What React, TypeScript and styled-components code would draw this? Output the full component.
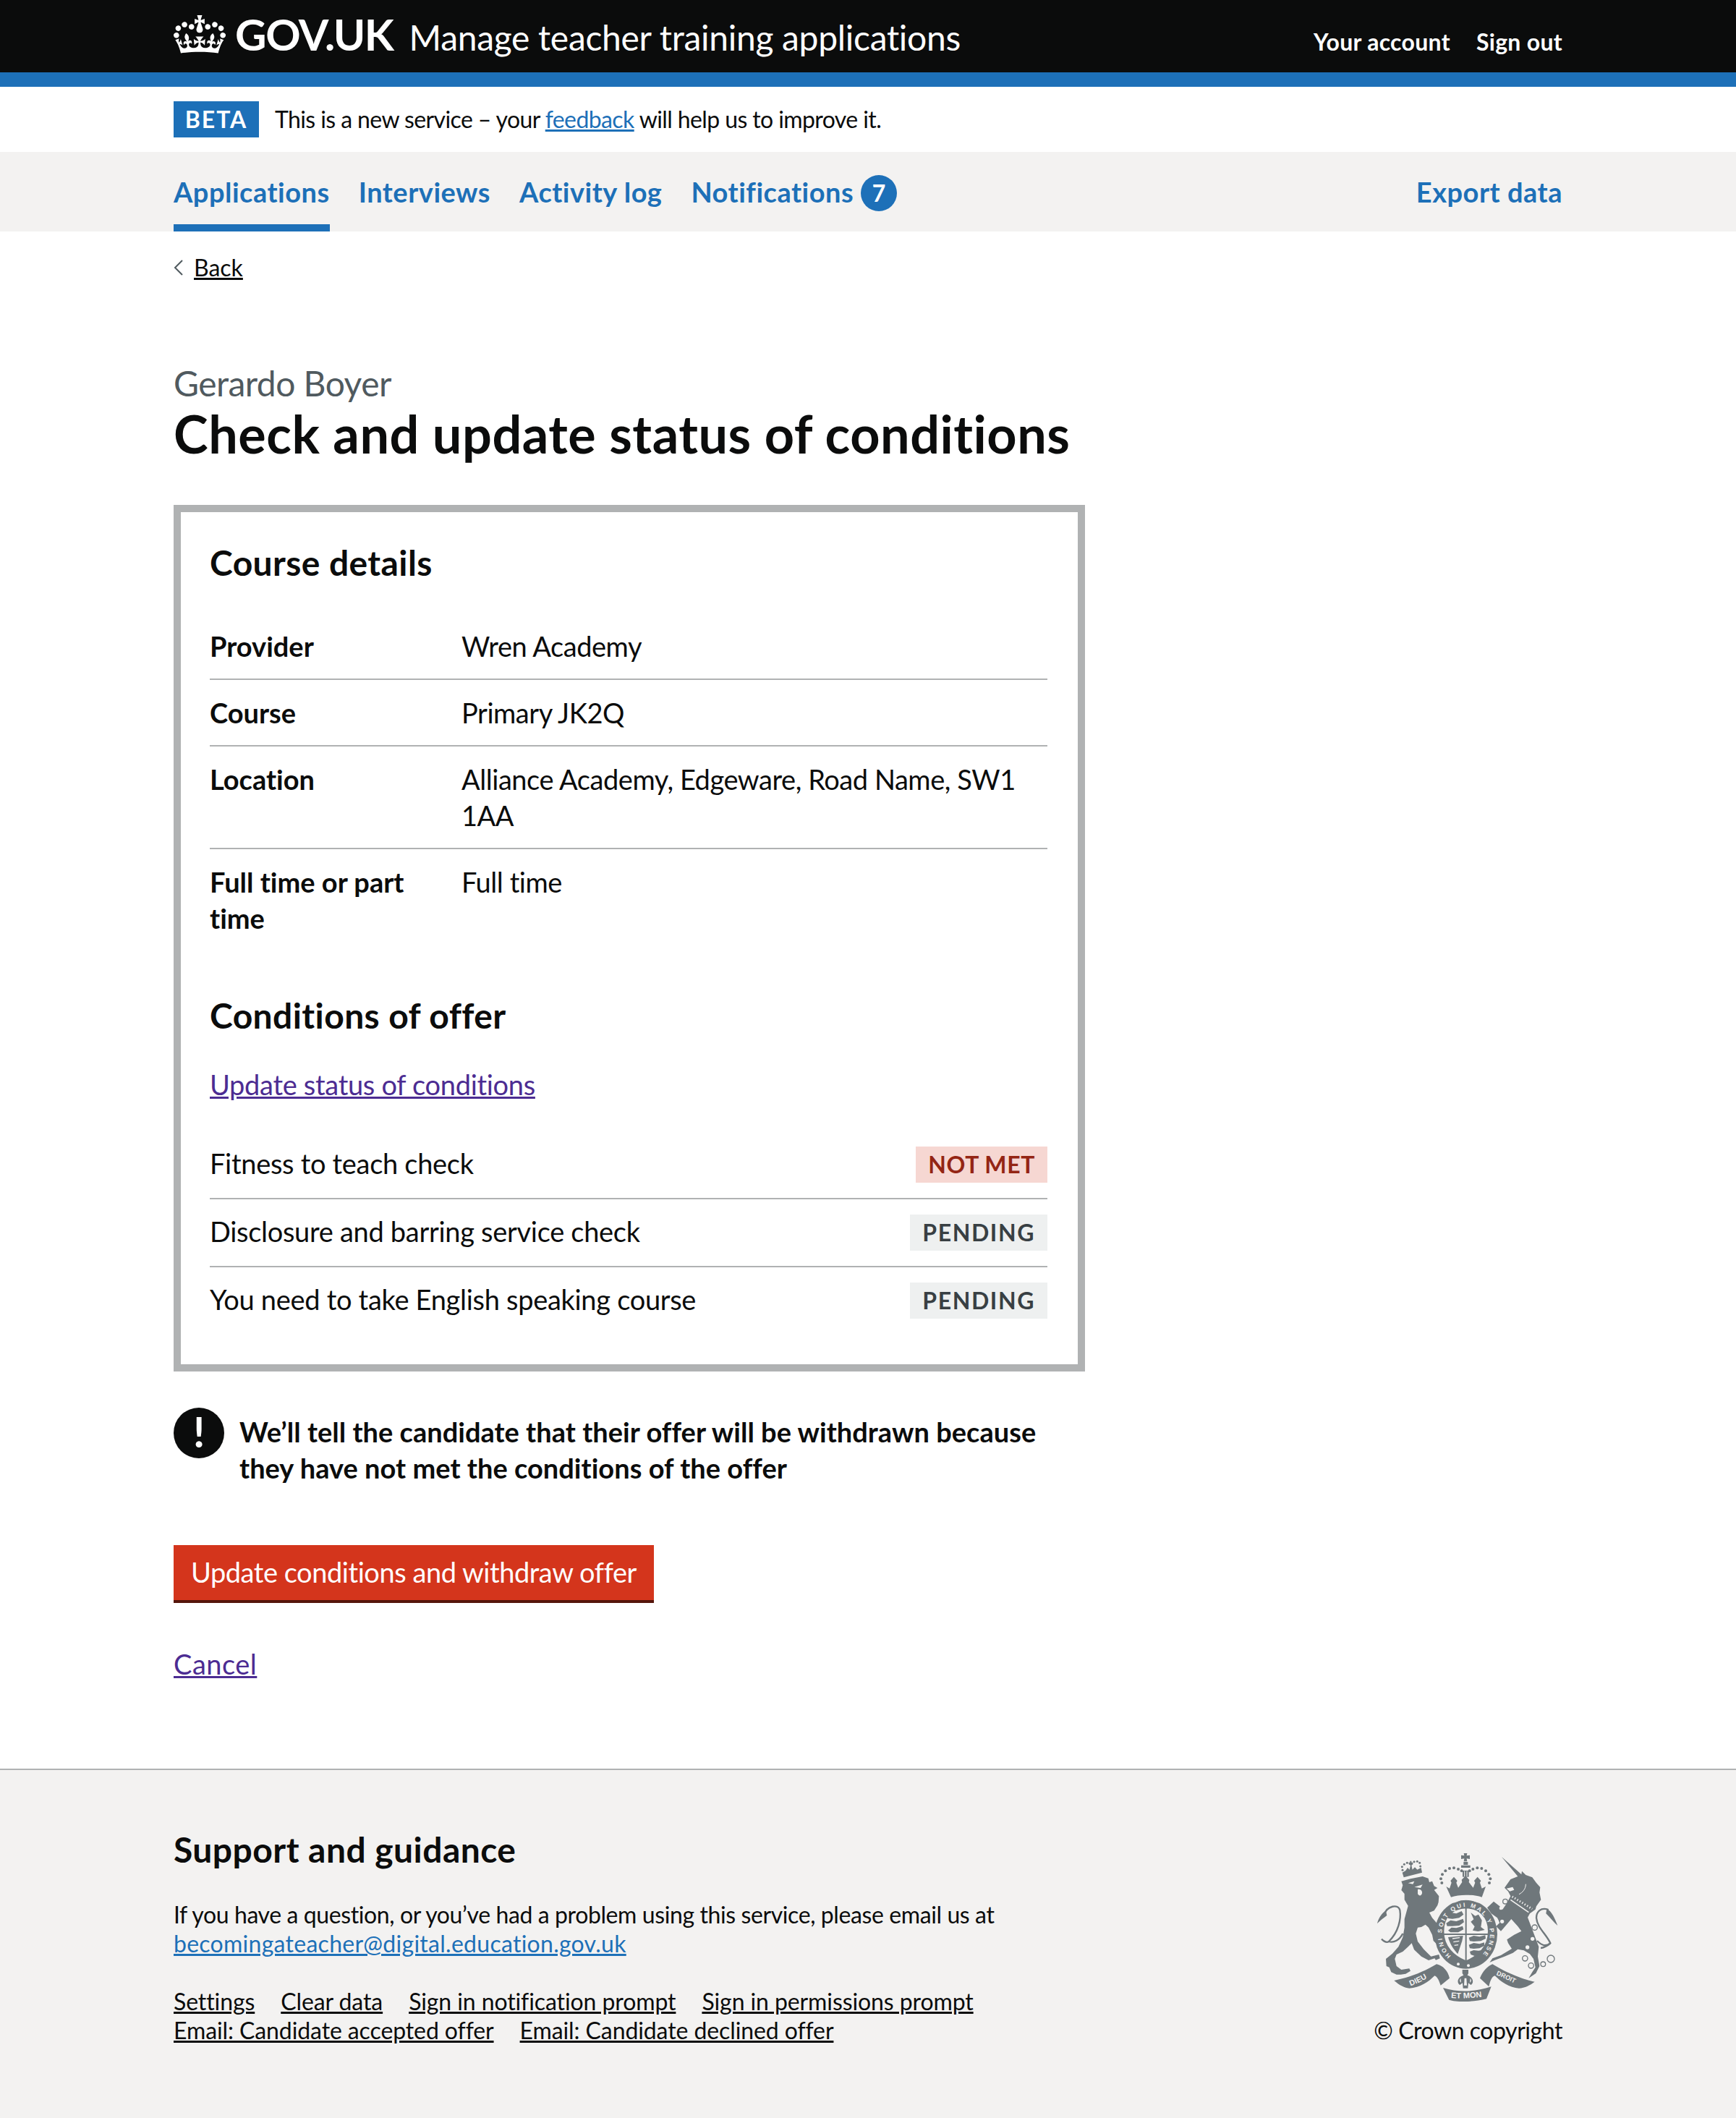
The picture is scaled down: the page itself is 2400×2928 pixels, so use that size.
import React from "react";
import styled, { createGlobalStyle } from "styled-components";

const GlobalStyle = createGlobalStyle`
  html, body {
    margin: 0;
    padding: 0;
    background: #fff;
    color: #0b0c0c;
    font-family: Lato, Arial, sans-serif;
    font-size: 38px;
    line-height: 50px;
    letter-spacing: -0.45px;
    font-variant-ligatures: none;
  }
  * { box-sizing: border-box; }
  a { text-decoration: none; }
`;

const Page = styled.div`
  width: 2400px;
  min-height: 2928px;
  display: flex;
  flex-direction: column;
`;

const Width = styled.div`
  width: 1920px;
  margin: 0 auto;
`;

const Header = styled.header`
  height: 120px;
  background: #0b0c0c;
  border-bottom: 20px solid #1d70b8;
  color: #fff;
`;

const HeaderInner = styled(Width)`
  height: 100px;
  display: flex;
  align-items: center;
`;

const Crown = styled.svg`
  width: 72px;
  height: 53px;
  margin-right: 13px;
  margin-top: -5px;
  fill: #fff;
`;

const Logotype = styled.span`
  font-size: 60px;
  font-weight: 700;
  line-height: 60px;
  letter-spacing: -1.4px;
  margin-right: 22px;
  margin-top: -6px;
`;

const ServiceName = styled.span`
  font-size: 48px;
  line-height: 60px;
  letter-spacing: -0.3px;
  margin-top: 4px;
`;

const HeaderLinks = styled.div`
  margin-left: auto;
  display: flex;
  gap: 36px;
  font-size: 32px;
  font-weight: 700;
  letter-spacing: 0.3px;
  margin-top: 16px;
`;

const BetaBanner = styled(Width)`
  height: 90px;
  display: flex;
  align-items: center;
  font-size: 32px;
  line-height: 40px;
  letter-spacing: -0.6px;
`;

const BetaTag = styled.strong`
  width: 118px;
  height: 50px;
  display: flex;
  align-items: center;
  justify-content: center;
  margin-right: 22px;
  background: #1d70b8;
  color: #fff;
  font-size: 32px;
  letter-spacing: 2px;
`;

const BlueLink = styled.a`
  color: #1d70b8;
  text-decoration: underline;
`;

const NavBar = styled.nav`
  height: 110px;
  background: #f3f2f1;
`;

const NavInner = styled(Width)`
  height: 110px;
  display: flex;
  gap: 40px;
`;

const NavItem = styled.a<{ $active?: boolean; $end?: boolean }>`
  display: flex;
  align-items: center;
  height: 110px;
  padding-top: 10px;
  color: #1d70b8;
  font-weight: 700;
  letter-spacing: 0.5px;
  border-bottom: 10px solid ${(p) => (p.$active ? "#1d70b8" : "transparent")};
  margin-left: ${(p) => (p.$end ? "auto" : "0")};
`;

const Badge = styled.span`
  width: 50px;
  height: 50px;
  margin-left: 10px;
  margin-top: 4px;
  border-radius: 50%;
  background: #1d70b8;
  color: #fff;
  font-size: 32px;
  display: flex;
  align-items: center;
  justify-content: center;
`;

const BackLink = styled.a`
  display: flex;
  align-items: center;
  margin-top: 30px;
  margin-bottom: 110px;
  height: 40px;
  font-size: 32px;
  letter-spacing: 0;
  color: #0b0c0c;
  text-decoration: underline;
`;

const BackChevron = styled.svg`
  width: 14px;
  height: 24px;
  margin-right: 14px;
  fill: none;
  stroke: #505a5f;
  stroke-width: 2;
`;

const Main = styled(Width)`
  flex: 1;
`;

const Caption = styled.div`
  color: #505a5f;
  font-size: 48px;
  line-height: 60px;
  letter-spacing: -0.55px;
`;

const Title = styled.h1`
  margin: 0 0 58px;
  font-size: 72px;
  line-height: 78px;
  padding-bottom: 2px;
  font-weight: 700;
  letter-spacing: 0.5px;
`;

const Panel = styled.section`
  width: 1260px;
  border: 10px solid #b0b2b3;
  padding: 40px 42px 40px 40px;
`;

const SectionHeading = styled.h2`
  margin: 0 0 40px;
  font-size: 48px;
  line-height: 60px;
  font-weight: 700;
  letter-spacing: 0.4px;
`;

const SummaryList = styled.dl`
  margin: 0 0 60px;
`;

const SummaryRow = styled.div`
  display: flex;
  padding: 20px 0;
  border-bottom: 2px solid #b0b2b3;
  &:last-child { border-bottom: 0; }
`;

const SummaryKey = styled.dt`
  width: 348px;
  flex-shrink: 0;
  padding-right: 20px;
  font-weight: 700;
  letter-spacing: 0;
`;

const SummaryValue = styled.dd`
  margin: 0;
`;

const VisitedLink = styled.a`
  display: block;
  color: #4c2c92;
  text-decoration: underline;
  letter-spacing: -0.3px;
`;

const ConditionList = styled.div`
  margin-top: 40px;
  padding-bottom: 2px;
`;

const ConditionRow = styled.div`
  display: flex;
  align-items: center;
  justify-content: space-between;
  padding: 21px 0;
  border-bottom: 2px solid #b0b2b3;
  &:last-child { border-bottom: 0; }
`;

const ConditionText = styled.span`
  margin-top: -4px;
  letter-spacing: -0.3px;
`;

const StatusTag = styled.strong<{ $red?: boolean }>`
  height: 50px;
  padding: 0 17px;
  display: flex;
  align-items: center;
  font-size: 32px;
  letter-spacing: ${(p) => (p.$red ? "0.6px" : "1.6px")};
  background: ${(p) => (p.$red ? "#f6d7d2" : "#eef0f0")};
  color: ${(p) => (p.$red ? "#942514" : "#383f43")};
`;

const Warning = styled.div`
  display: flex;
  margin-top: 50px;
`;

const WarningIcon = styled.span`
  width: 70px;
  height: 70px;
  flex-shrink: 0;
  margin-right: 21px;
  border-radius: 50%;
  background: #0b0c0c;
  color: #fff;
  font-size: 58px;
  font-weight: 700;
  line-height: 66px;
  text-align: center;
`;

const WarningText = styled.strong`
  width: 1149px;
  padding-top: 8px;
  padding-bottom: 2px;
  letter-spacing: 0.02px;
`;

const DangerButton = styled.a`
  display: block;
  width: fit-content;
  margin-top: 80px;
  padding: 12px 24px 14px;
  background: #d4351c;
  color: #fff;
  box-shadow: 0 4px 0 #55150b;
`;

const CancelLink = styled(VisitedLink)`
  width: fit-content;
  margin-top: 63px;
  margin-bottom: 120px;
  letter-spacing: 0.5px;
`;

const Footer = styled.footer`
  height: 483px;
  background: #f3f2f1;
  border-top: 2px solid #b0b2b3;
  font-size: 32px;
  line-height: 40px;
`;

const FooterInner = styled(Width)`
  display: flex;
  justify-content: space-between;
  padding-top: 80px;
`;

const FooterHeading = styled.h2`
  margin: 0 0 40px;
  font-size: 48px;
  line-height: 60px;
  font-weight: 700;
  letter-spacing: 0.45px;
`;

const FooterQuestion = styled.div`
  letter-spacing: -0.4px;
`;

const FooterEmail = styled(BlueLink)`
  letter-spacing: 0.27px;
`;

const FooterLinks = styled.div`
  width: 1200px;
  margin-top: 40px;
  display: flex;
  flex-wrap: wrap;
  column-gap: 36px;
  line-height: 40px;
`;

const FooterLink = styled.a`
  color: #0b0c0c;
  text-decoration: underline;
  letter-spacing: -0.1px;
`;

const CopyrightBlock = styled.div`
  display: flex;
  flex-direction: column;
  align-items: flex-end;
  padding-top: 31px;
`;

const CopyrightText = styled.div`
  letter-spacing: -0.45px;
`;

const CrestSvg = styled.svg`
  width: 260px;
  height: 210px;
  margin-bottom: 19px;
`;

const CrestText = styled.text<{ $size: number }>`
  fill: #f3f2f1;
  font-family: "Liberation Sans", Arial, sans-serif;
  font-weight: 700;
  font-size: ${(p) => p.$size}px;
  letter-spacing: 0;
`;

function CrownMark() {
  return (
    <Crown viewBox="0 0 132 97" aria-hidden="true">
      <path
        fillRule="evenodd"
        d="M25 30.2c3.5 1.5 7.7-.2 9.1-3.7 1.5-3.6-.2-7.8-3.9-9.2-3.6-1.4-7.6.3-9.1 3.9-1.4 3.5.3 7.5 3.9 9zM9 39.5c3.6 1.5 7.8-.2 9.2-3.7 1.5-3.6-.2-7.8-3.9-9.1-3.6-1.5-7.6.2-9.1 3.8-1.4 3.5.3 7.5 3.8 9zM4.4 57.2c3.5 1.5 7.7-.2 9.1-3.8 1.5-3.6-.2-7.7-3.9-9.1-3.5-1.5-7.6.3-9.1 3.8-1.4 3.5.3 7.6 3.9 9.1zm38.3-21.4c3.5 1.5 7.7-.2 9.1-3.8 1.5-3.6-.2-7.7-3.9-9.1-3.6-1.5-7.6.3-9.1 3.8-1.3 3.6.4 7.7 3.9 9.1zm64.4-5.6c-3.6 1.5-7.8-.2-9.1-3.7-1.5-3.6.2-7.8 3.8-9.2 3.6-1.4 7.7.3 9.2 3.9 1.3 3.5-.4 7.5-3.9 9zm15.9 9.3c-3.6 1.5-7.7-.2-9.1-3.7-1.5-3.6.2-7.8 3.7-9.1 3.6-1.5 7.7.2 9.2 3.8 1.5 3.5-.3 7.5-3.8 9zm4.7 17.7c-3.6 1.5-7.8-.2-9.2-3.8-1.5-3.6.2-7.7 3.9-9.1 3.6-1.5 7.7.3 9.2 3.8 1.3 3.5-.4 7.6-3.9 9.1zM89.3 35.8c-3.6 1.5-7.8-.2-9.2-3.8-1.4-3.6.2-7.7 3.9-9.1 3.6-1.5 7.7.3 9.2 3.8 1.4 3.6-.3 7.7-3.9 9.1zM69.7 17.7l8.9 4.7V9.3l-8.9 2.8c-.2-.3-.5-.6-.9-.9L72.4 0H59.6l3.5 11.2c-.3.3-.6.5-.9.9l-8.8-2.8v13.1l8.8-4.7c.3.3.6.7.9.9l-5 15.4v.1c-.2.8-.4 1.6-.4 2.4 0 4.1 3.1 7.5 7 8.1h.2c.3 0 .7.1 1 .1.4 0 .7 0 1-.1h.2c4-.6 7.1-4.1 7.1-8.1 0-.8-.1-1.7-.4-2.4V34l-5.1-15.4c.4-.2.7-.6 1-.9zM66 92.8c16.9 0 32.8 1.1 47.1 3.2 4-16.9 8.9-26.7 14-33.5l-9.6-3.4c1 4.9 1.1 7.2 0 10.2-1.5-1.4-3-4.3-4.2-8.7L108.6 76c2.8-2 5-3.2 7.5-3.3-4.4 9.4-10 11.9-13.6 11.2-4.3-.8-6.3-4.6-5.6-7.9 1-4.7 5.7-5.9 8-.5 4.3-8.7-3-11.4-7.6-8.8 7.1-7.2 7.9-13.5 2.1-21.1-8 6.1-8.1 12.3-4.5 20.8-4.7-5.4-12.1-2.5-9.5 6.2 3.4-5.2 7.9-2 7.2 3.1-.6 4.3-6.4 7.8-13.5 7.2-10.3-.9-10.9-8-11.2-13.8 2.5-.5 7.1 1.8 11 7.3L80.2 60c-4.1 4.4-8 5.3-12.3 5.4 1.4-4.4 8-11.6 8-11.6H55.5s6.4 7.2 7.9 11.6c-4.2-.1-8-1-12.3-5.4l1.4 16.4c3.9-5.5 8.5-7.7 10.9-7.3-.3 5.8-.9 12.8-11.1 13.8-7.2.6-12.9-2.9-13.5-7.2-.7-5 3.8-8.3 7.1-3.1 2.7-8.7-4.6-11.6-9.4-6.2 3.7-8.5 3.6-14.7-4.6-20.8-5.8 7.6-5 13.9 2.2 21.1-4.7-2.6-11.9.1-7.7 8.8 2.3-5.5 7.1-4.2 8.1.5.7 3.3-1.3 7.1-5.7 7.9-3.5.7-9-1.8-13.5-11.2 2.5.1 4.7 1.3 7.5 3.3l-4.7-15.4c-1.2 4.4-2.7 7.2-4.3 8.7-1.1-3-.9-5.3 0-10.2l-9.5 3.4c5 6.9 9.9 16.7 14 33.5 14.8-2.1 30.8-3.2 47.7-3.2z"
      />
    </Crown>
  );
}

const INK = "#6f777b";
const BG = "#f3f2f1";

const crownDots: [number, number][] = [
  [40, 135], [36, 118], [42, 100], [55, 85], [72, 75], [90, 73], [108, 78], [122, 85],
  [237, 135], [241, 118], [235, 100], [222, 85], [205, 75], [187, 73], [169, 78], [155, 85],
];

const lionCrownDots: [number, number][] = [
  [117, 82], [115, 68], [124, 58], [136, 52], [165, 47], [178, 46], [188, 52], [191, 66], [190, 80],
];

// traced from the 3x crops: lion at x+0, shield at x+240, unicorn at x+450
function Crest() {
  return (
    <CrestSvg viewBox="0 0 780 630" aria-hidden="true">
      {/* lion */}
      <g fill={INK}>
        <path d="M112 128L150 118L200 108L224 116L228 132L240 128L248 148L262 156L248 164L268 190L266 215L262 228L248 250L228 258L240 280L262 305L278 345L285 368L270 372L262 392L245 375L240 350L225 320L212 308L195 318L180 320L172 345L180 378L205 410L235 440L268 432L272 448L255 455L250 448L225 456L195 440L165 412L155 385L140 400L118 420L92 432L85 450L92 480L112 495L145 490L150 500L130 512L110 515L92 515L70 505L62 485L50 480L48 450L75 428L100 400L118 360L125 320L125 285L140 230L125 205L125 180L112 165L118 145Z" />
        <path d="M122 112L116 92L130 84L138 72L146 80L150 62L143 58V50H148V44H154V50H160V58L154 62L158 80L168 70L178 80L194 72L198 92Z" />
        <path d="M12 303C18 280 30 262 48 250L52 270C40 280 25 290 12 303Z" />
        {lionCrownDots.map(([x, y], i) => (
          <circle key={i} cx={x} cy={y} r="4.5" />
        ))}
      </g>
      <g fill="none" stroke={INK} strokeWidth="7">
        <path d="M40 268C52 230 100 220 106 248C112 285 100 340 60 378C50 385 40 378 30 368" />
        <path d="M60 378C80 385 105 372 118 345" />
      </g>
      <g fill={BG}>
        <path d="M140 136L166 128L160 140ZM166 152L200 142L192 156ZM180 162C190 158 200 168 198 178C196 190 184 190 180 180Z" />
      </g>

      {/* shield and royal crown */}
      <g transform="translate(240 0)">
        <g fill={INK}>
          <ellipse cx="140" cy="348" rx="130" ry="143" />
          <path d="M58 150L72 158L80 134L76 126L90 110L104 126L100 134L108 155L124 132L122 122L138 106L154 122L152 132L170 155L178 134L174 126L188 110L202 126L198 134L206 158L222 150L206 194C170 182 110 182 78 194Z" />
          <rect x="126" y="84" width="26" height="26" />
          <path d="M131 12H145L143 22L156 20V36L143 34L145 46H131L133 34L120 36V20L133 22Z" />
          <path d="M130 48H148V60H130ZM120 62H158V72H120Z" />
          {crownDots.map(([x, y], i) => (
            <circle key={i} cx={x} cy={y} r="6" />
          ))}
        </g>
        <path
          d="M85 208C110 186 170 186 198 208C204 218 190 220 180 214C160 204 120 204 102 214C92 220 78 218 85 208Z"
          fill={BG}
        />
        <path d="M134 86V108M144 86V108" stroke={BG} strokeWidth="3" />
        <path
          d="M46 335C46 275 84 240 140 238C196 240 234 275 234 335C234 400 190 440 140 460C90 440 46 400 46 335Z"
          fill={BG}
        />
        <path
          d="M46 335C46 275 84 240 140 238C196 240 234 275 234 335C234 400 190 440 140 460C90 440 46 400 46 335ZM50 348H230M140 238V460"
          fill="none"
          stroke={INK}
          strokeWidth="6"
        />
        <g fill={INK}>
          {/* quarter 1: three lions */}
          <path d="M62 270L78 258L100 262L122 252L130 266L112 280L84 284L66 282Z" />
          <path d="M58 302L76 290L100 294L128 284L132 298L112 312L84 314L62 314Z" />
          <path d="M66 332L80 320L100 322L126 314L130 328L108 340H76Z" />
          {/* quarter 2: rampant lion */}
          <path d="M160 258L178 272L192 266L206 290L202 318L218 330L190 336L168 332L176 316L160 296L172 286Z" />
          {/* quarter 3: harp */}
          <path d="M66 360L128 354L124 376L106 430C90 412 74 390 66 360Z" />
          {/* quarter 4: three lions */}
          <path d="M152 362L172 354L196 358L220 352L222 366L202 376L172 378L156 376Z" />
          <path d="M152 392L172 384L196 388L216 382L216 396L196 406L172 408L156 406Z" />
          <path d="M156 420L172 414L192 416L206 414L198 428L176 438L160 432Z" />
        </g>
        <path d="M84 366L114 362M88 380L112 376M92 394L108 392" stroke={BG} strokeWidth="4" />
        <g fill={BG}>
          <circle cx="108" cy="472" r="6" />
          <circle cx="150" cy="478" r="6" />
        </g>
        <defs>
          <path id="garter" d="M78 438A100 114 0 1 1 202 438" />
        </defs>
        <CrestText $size={25}>
          <textPath href="#garter" textLength="525" lengthAdjust="spacing">
            HONI SOIT QUI MAL Y PENSE
          </textPath>
        </CrestText>
        {/* fleur */}
        <path
          fill={INK}
          d="M125 495H150V510L146 518C170 525 175 550 160 558L150 550L148 572H128L126 550L115 558C100 550 105 525 130 518L125 510Z"
        />
        <path fill={BG} d="M118 530C112 538 114 546 120 548ZM158 530C164 538 162 546 156 548ZM134 530H142L144 560H132Z" />
      </g>

      {/* ribbons */}
      <g fill={INK}>
        <path d="M82 540L130 528C175 515 220 495 258 472C285 478 305 500 312 530L275 560C268 540 262 525 250 520C225 545 190 570 145 572C125 570 105 560 82 540Z" />
        <path transform="translate(450 0)" d="M215 545C180 540 100 510 40 472C20 480 0 500 -12 530L25 565C30 545 35 525 50 520C75 545 110 570 150 572C175 570 195 560 215 545Z" />
        <path transform="translate(240 0)" d="M45 570C110 590 175 588 245 565L225 616C170 630 100 630 70 620Z" />
      </g>
      <defs>
        <path id="dieuPath" d="M150 562C185 550 220 530 250 510" />
        <path id="droitPath" d="M505 516C540 530 580 552 622 570" />
        <path id="monLine" d="M318 612C360 616 420 612 470 604" />
      </defs>
      <CrestText $size={32}>
        <textPath href="#dieuPath">DIEU</textPath>
      </CrestText>
      <CrestText $size={27}>
        <textPath href="#droitPath">DROIT</textPath>
      </CrestText>
      <CrestText $size={33}>
        <textPath href="#monLine">ET MON</textPath>
      </CrestText>

      {/* unicorn */}
      <g transform="translate(450 0)">
        <path
          fill={INK}
          d="M78 27L160 100L162 86L178 102L205 112L222 135L238 153L235 175L241 205L222 232L218 245L195 262L186 278L200 315L215 355L232 400L228 440L235 480L220 510L190 530L205 505L218 485L210 450L195 430L170 415L145 410L125 425L90 440L50 455L28 465L40 448L75 435L120 408L105 385L100 370L130 350L160 335L145 315L118 285L90 318L75 335L55 315L70 300L60 280L35 262L18 238L45 212L70 232L82 245L100 218L115 190L105 170L90 155L115 120L145 108Z"
        />
        <g fill="none" stroke={INK} strokeWidth="7">
          <path d="M272 246C240 235 222 255 222 280C225 320 265 350 280 385C270 395 250 405 240 405" />
          <path d="M280 385C260 400 245 395 225 375" />
        </g>
        <path fill={INK} d="M265 243C285 250 300 285 310 312C295 300 280 280 262 262Z" />
        <g fill="none" stroke={BG}>
          <path d="M115 205L190 257" strokeWidth="5" />
          <path d="M122 192L205 243" strokeWidth="9" strokeDasharray="4 8" />
          <path d="M178 140C178 160 165 175 150 182" strokeWidth="3" />
        </g>
        <path fill={BG} d="M98 158L124 152L130 164L112 170Z" />
        <g fill={BG} stroke={INK} strokeWidth="4">
          <circle cx="93" cy="212" r="10" />
          <circle cx="80" cy="295" r="10" />
          <circle cx="215" cy="320" r="11" />
          <circle cx="175" cy="448" r="11" />
          <circle cx="200" cy="478" r="11" />
          <circle cx="250" cy="472" r="10" />
          <circle cx="282" cy="450" r="15" />
        </g>
        <g fill={BG}>
          <circle cx="206" cy="367" r="8" />
          <circle cx="185" cy="402" r="8" />
          <circle cx="75" cy="240" r="7" />
        </g>
      </g>
    </CrestSvg>
  );
}

const summary = [
  { key: "Provider", value: "Wren Academy" },
  { key: "Course", value: "Primary JK2Q" },
  { key: "Location", value: "Alliance Academy, Edgeware, Road Name, SW1 1AA" },
  { key: "Full time or part time", value: "Full time" },
];

const conditions = [
  { text: "Fitness to teach check", status: "NOT MET", red: true },
  { text: "Disclosure and barring service check", status: "PENDING", red: false },
  { text: "You need to take English speaking course", status: "PENDING", red: false },
];

export default function App() {
  return (
    <Page>
      <GlobalStyle />
      <Header>
        <HeaderInner>
          <CrownMark />
          <Logotype>GOV.UK</Logotype>
          <ServiceName>Manage teacher training applications</ServiceName>
          <HeaderLinks>
            <span>Your account</span>
            <span>Sign out</span>
          </HeaderLinks>
        </HeaderInner>
      </Header>
      <BetaBanner>
        <BetaTag>BETA</BetaTag>
        <span>
          This is a new service – your <BlueLink href="#">feedback</BlueLink> will help us to improve it.
        </span>
      </BetaBanner>
      <NavBar>
        <NavInner>
          <NavItem $active>Applications</NavItem>
          <NavItem>Interviews</NavItem>
          <NavItem>Activity log</NavItem>
          <NavItem>
            Notifications<Badge>7</Badge>
          </NavItem>
          <NavItem $end>Export data</NavItem>
        </NavInner>
      </NavBar>
      <Main as="main">
        <BackLink href="#">
          <BackChevron viewBox="0 0 14 24">
            <path d="M12 2L2 12L12 22" />
          </BackChevron>
          Back
        </BackLink>
        <Caption>Gerardo Boyer</Caption>
        <Title>Check and update status of conditions</Title>
        <Panel>
          <SectionHeading>Course details</SectionHeading>
          <SummaryList>
            {summary.map((row) => (
              <SummaryRow key={row.key}>
                <SummaryKey>{row.key}</SummaryKey>
                <SummaryValue>{row.value}</SummaryValue>
              </SummaryRow>
            ))}
          </SummaryList>
          <SectionHeading>Conditions of offer</SectionHeading>
          <VisitedLink href="#">Update status of conditions</VisitedLink>
          <ConditionList>
            {conditions.map((row) => (
              <ConditionRow key={row.text}>
                <ConditionText>{row.text}</ConditionText>
                <StatusTag $red={row.red}>{row.status}</StatusTag>
              </ConditionRow>
            ))}
          </ConditionList>
        </Panel>
        <Warning>
          <WarningIcon>!</WarningIcon>
          <WarningText>
            We’ll tell the candidate that their offer will be withdrawn because they have not met the conditions of the offer
          </WarningText>
        </Warning>
        <DangerButton href="#">Update conditions and withdraw offer</DangerButton>
        <CancelLink href="#">Cancel</CancelLink>
      </Main>
      <Footer>
        <FooterInner>
          <div>
            <FooterHeading>Support and guidance</FooterHeading>
            <FooterQuestion>If you have a question, or you’ve had a problem using this service, please email us at</FooterQuestion>
            <FooterEmail href="#">becomingateacher@digital.education.gov.uk</FooterEmail>
            <FooterLinks>
              <FooterLink href="#">Settings</FooterLink>
              <FooterLink href="#">Clear data</FooterLink>
              <FooterLink href="#">Sign in notification prompt</FooterLink>
              <FooterLink href="#">Sign in permissions prompt</FooterLink>
              <FooterLink href="#">Email: Candidate accepted offer</FooterLink>
              <FooterLink href="#">Email: Candidate declined offer</FooterLink>
            </FooterLinks>
          </div>
          <CopyrightBlock>
            <Crest />
            <CopyrightText>© Crown copyright</CopyrightText>
          </CopyrightBlock>
        </FooterInner>
      </Footer>
    </Page>
  );
}
